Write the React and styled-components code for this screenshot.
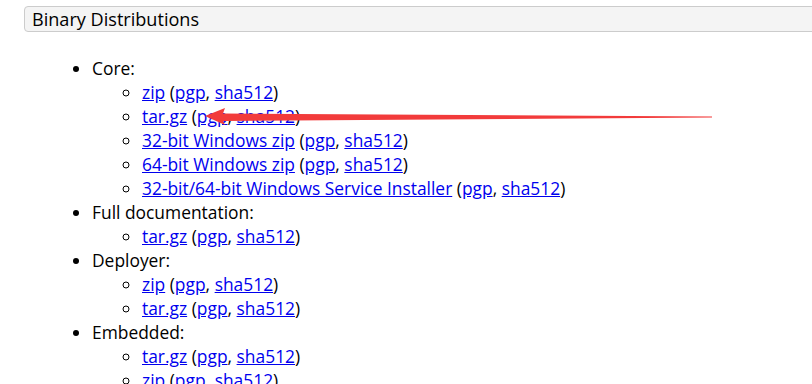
import React from "react";
import styled, { createGlobalStyle } from "styled-components";

const Global = createGlobalStyle`
  body {
    margin: 0;
    background: #fff;
    font-family: "Open Sans", "Liberation Sans", sans-serif;
    font-size: 17.4px;
    color: #000;
  }
`;

const Page = styled.div`
  position: relative;
  width: 812px;
  height: 384px;
  overflow: hidden;
  padding-top: 6px;
  box-sizing: border-box;
`;

// заголовок в серой плашке
const SectionHeader = styled.h3`
  margin: 0 -10px 0 24px;
  height: 26px;
  box-sizing: border-box;
  padding: 0 7px;
  background: #f4f4f4;
  border: 1px solid #ccc;
  border-radius: 4px;
  font-size: 18.1px;
  font-weight: 500;
  line-height: 25px;
`;

const List = styled.ul`
  margin: 24px 0 0;
  padding-left: 92px;
  list-style: disc;
  line-height: 24px;
`;

const SubList = styled.ul`
  margin: 0;
  padding-left: 50px;
  list-style: circle;
`;

const Link = styled.a`
  color: #0000ee;
  text-decoration: underline;
`;

const Arrow = styled.svg`
  position: absolute;
  left: 200px;
  top: 104px;
`;

const Files = ({ name }) => (
  <li>
    <Link href="#">{name}</Link> (<Link href="#">pgp</Link>,{" "}
    <Link href="#">sha512</Link>)
  </li>
);

const groups = [
  {
    title: "Core:",
    files: [
      "zip",
      "tar.gz",
      "32-bit Windows zip",
      "64-bit Windows zip",
      "32-bit/64-bit Windows Service Installer",
    ],
  },
  { title: "Full documentation:", files: ["tar.gz"] },
  { title: "Deployer:", files: ["zip", "tar.gz"] },
  { title: "Embedded:", files: ["tar.gz", "zip"] },
];

export default function App() {
  return (
    <>
      <Global />
      <Page>
        <SectionHeader>Binary Distributions</SectionHeader>
        <List>
          {groups.map((g) => (
            <li key={g.title}>
              {g.title}
              <SubList>
                {g.files.map((f) => (
                  <Files key={f} name={f} />
                ))}
              </SubList>
            </li>
          ))}
        </List>
        <Arrow width="520" height="26" viewBox="0 0 520 26">
          <polygon
            points="5,12 25,4 23,9.5 512,12.6 512,13.6 23,17 25,21"
            fill="#f23b3b"
          />
        </Arrow>
      </Page>
    </>
  );
}
